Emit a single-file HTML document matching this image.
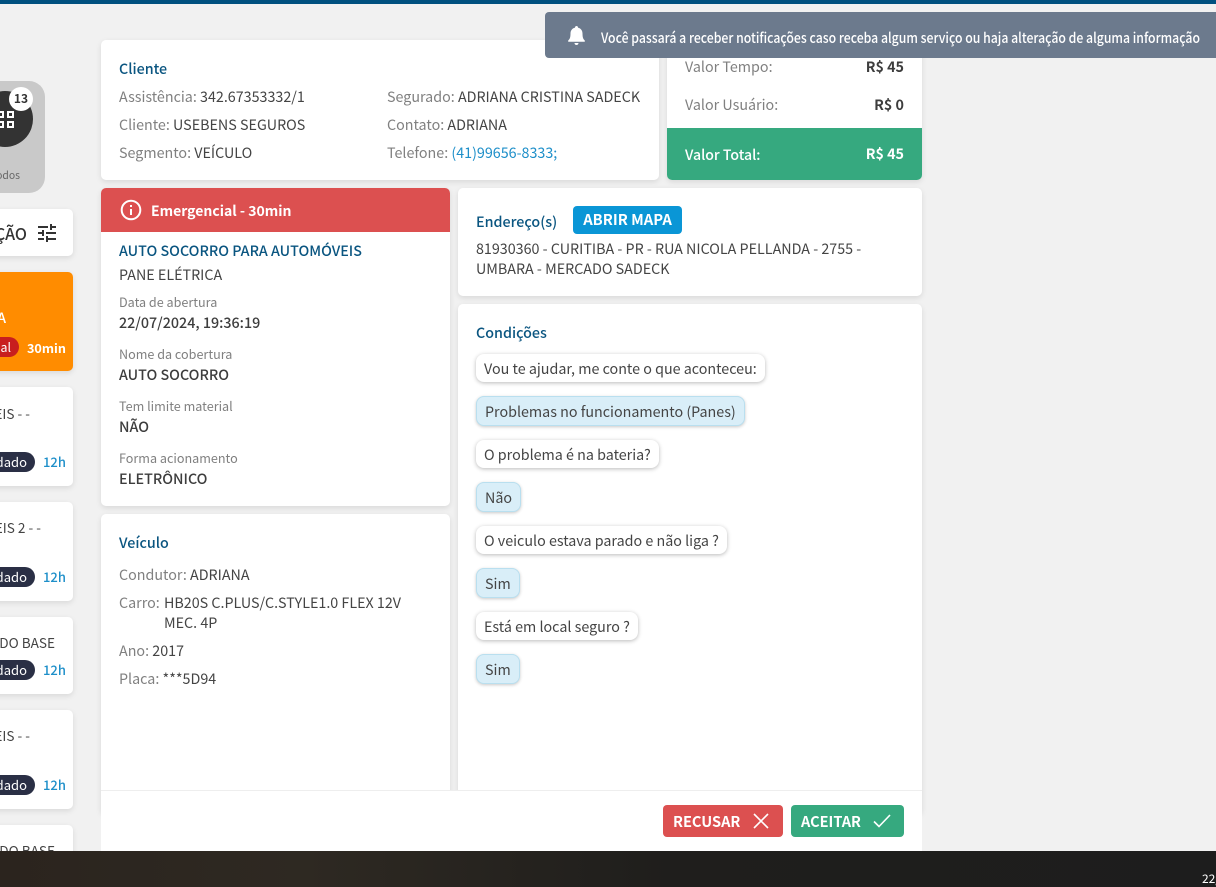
<!DOCTYPE html>
<html lang="pt-BR"><head><meta charset="utf-8"><title>Serviço</title>
<style>
html,body{margin:0;padding:0;width:1216px;height:887px;overflow:hidden;background:#f1f1f1}
body{position:relative;font-family:"Noto Sans CJK JP","Liberation Sans",sans-serif;font-size:14.3px;color:#444}
div,span,svg{box-sizing:border-box}
.a,.t{position:absolute}
.t{white-space:nowrap;line-height:20px}
.c{position:absolute;background:#fff;border-radius:5px;box-shadow:0 2px 6px rgba(0,0,0,.1)}
.g{color:#808080}
.h{color:#0a5580;font-weight:500}
.s{font-size:12.6px;color:#808080}
.b{font-weight:500;color:#3d3d3d}
.r{left:-300px;text-align:right}
.n{font-size:13.6px}
.q,.w{position:absolute;left:476px;height:28px;line-height:29px;border-radius:8px;padding:0 8px;white-space:nowrap}
.q{background:#fff;box-shadow:0 1px 4px rgba(0,0,0,.28)}
.w{height:30px;line-height:29px;padding:0 8px;background:#d9eef8;border:1px solid #b9dfef;box-shadow:0 1px 3px rgba(0,0,0,.22)}
.p{position:absolute;left:-40px;height:20px;border-radius:10px;background:#2a2f45;color:#fff;font-size:13px;line-height:20px;text-align:right;padding-right:8px;white-space:nowrap}
.tm{position:absolute;left:43px;color:#1e8fc9;font-weight:500;line-height:20px;font-size:13px}
</style></head><body>
<div class="a" style="left:0;top:0;width:1216px;height:4px;background:#00507f"></div>

<!-- sidebar -->
<div class="a" style="left:0;top:0;width:95px;height:887px;overflow:hidden">
<div class="a" style="left:-60px;top:81px;width:105px;height:112px;background:#c9c9c9;border-radius:16px"></div>
<div class="a" style="left:-23px;top:91px;width:56px;height:56px;background:#333;border-radius:50%"></div>
<div class="a" style="left:-3px;top:111px;width:7px;height:7px;border:2px solid #fff"></div>
<div class="a" style="left:7px;top:111px;width:7px;height:7px;border:2px solid #fff"></div>
<div class="a" style="left:-3px;top:121px;width:7px;height:7px;border:2px solid #fff"></div>
<div class="a" style="left:7px;top:121px;width:7px;height:7px;border:2px solid #fff"></div>
<div class="a" style="left:9px;top:87px;width:24px;height:24px;background:#fff;border-radius:50%;text-align:center;font-size:12px;line-height:24px;font-weight:700;color:#333">13</div>
<div class="t r" style="width:320px;top:165px;font-size:10.4px;color:#666">Todos</div>

<div class="c" style="left:-40px;top:209px;width:113px;height:47px"></div>
<div class="t r" style="width:327px;top:223px;color:#333;font-weight:500;font-size:16px">FILTRAÇÃO</div>
<svg class="a" style="left:38px;top:224px" width="18" height="18" viewBox="3 3 18 18" fill="#333"><path d="M3 17v2h6v-2H3zM3 5v2h10V5H3zm10 16v-2h8v-2h-8v-2h-2v6h2zM7 9v2H3v2h4v2h2V9H7zm14 4v-2H11v2h10zm-6-4h2V7h4V5h-4V3h-2v6z"/></svg>

<div class="a" style="left:-40px;top:272px;width:113px;height:99px;background:#ff8c00;border-radius:5px;box-shadow:0 2px 6px rgba(0,0,0,.1)"></div>
<div class="t r" style="width:306px;top:308px;color:#fff;font-weight:500">A</div>
<div class="p" style="top:337px;left:-80px;width:99px;background:#c81e1e;font-size:12.4px">Emergencial</div>
<div class="t" style="left:27px;top:338px;color:#fff;font-weight:700;font-size:12.6px">30min</div>

<div class="c" style="left:-40px;top:387px;width:113px;height:99px"></div>
<div class="t r n" style="width:330px;top:403px">AUTOMÓVEIS - -</div>
<div class="p" style="top:452px;width:75px">Agendado</div><div class="tm" style="top:452px">12h</div>

<div class="c" style="left:-40px;top:502px;width:113px;height:99px"></div>
<div class="t r n" style="width:341px;top:517px">AUTOMÓVEIS 2 - -</div>
<div class="p" style="top:567px;width:75px">Agendado</div><div class="tm" style="top:567px">12h</div>

<div class="c" style="left:-40px;top:617px;width:113px;height:77px"></div>
<div class="t r n" style="width:355px;top:632px">RETORNANDO BASE</div>
<div class="p" style="top:660px;width:75px">Agendado</div><div class="tm" style="top:660px">12h</div>

<div class="c" style="left:-40px;top:710px;width:113px;height:99px"></div>
<div class="t r n" style="width:330px;top:725px">AUTOMÓVEIS - -</div>
<div class="p" style="top:775px;width:75px">Agendado</div><div class="tm" style="top:775px">12h</div>

<div class="c" style="left:-40px;top:825px;width:113px;height:60px"></div>
<div class="t r n" style="width:355px;top:840px">RETORNANDO BASE</div>
</div>

<!-- Cliente -->
<div class="c" style="left:101px;top:40px;width:558px;height:140px"></div>
<div class="t h" style="left:119px;top:59px">Cliente</div>
<div class="t" style="left:119px;top:87px"><span class="g">Assistência:</span> 342.67353332/1</div>
<div class="t" style="left:119px;top:115px"><span class="g">Cliente:</span> USEBENS SEGUROS</div>
<div class="t" style="left:119px;top:143px"><span class="g">Segmento:</span> VEÍCULO</div>
<div class="t" style="left:387px;top:87px"><span class="g">Segurado:</span> ADRIANA CRISTINA SADECK</div>
<div class="t" style="left:387px;top:115px"><span class="g">Contato:</span> ADRIANA</div>
<div class="t" style="left:387px;top:143px"><span class="g">Telefone:</span> <span style="color:#1e8fc9">(41)99656-8333;</span></div>

<!-- Valores -->
<div class="c" style="left:667px;top:30px;width:255px;height:150px;overflow:hidden"><div class="a" style="left:0;top:98px;width:255px;height:52px;background:#36a97f"></div></div>
<div class="t g" style="left:685px;top:57px">Valor Tempo:</div><div class="t b" style="left:800px;width:104px;text-align:right;top:57px;font-weight:700">R$ 45</div>
<div class="t g" style="left:685px;top:95px">Valor Usuário:</div><div class="t b" style="left:800px;width:104px;text-align:right;top:95px;font-weight:700">R$ 0</div>
<div class="t" style="left:685px;top:145px;color:#fff;font-weight:500;font-size:14.100px">Valor Total:</div><div class="t" style="left:800px;width:104px;text-align:right;top:144px;color:#fff;font-weight:700">R$ 45</div>

<!-- Emergencial -->
<div class="c" style="left:101px;top:188px;width:349px;height:318px;overflow:hidden"><div class="a" style="left:0;top:0;width:349px;height:44px;background:#dc5050"></div></div>
<svg class="a" style="left:120px;top:199px" width="22" height="22" viewBox="0 0 22 22" fill="none" stroke="#fff" stroke-width="2"><circle cx="11" cy="11" r="9.300"/><path d="M11 10v6M11 6v2"/></svg>
<div class="t" style="left:151px;top:201px;color:#fff;font-weight:700;font-size:14px">Emergencial - 30min</div>
<div class="t h" style="left:119px;top:241px">AUTO SOCORRO PARA AUTOMÓVEIS</div>
<div class="t" style="left:119px;top:265px">PANE ELÉTRICA</div>
<div class="t s" style="left:119px;top:292px">Data de abertura</div>
<div class="t b" style="left:119px;top:313px">22/07/2024, 19:36:19</div>
<div class="t s" style="left:119px;top:344px">Nome da cobertura</div>
<div class="t b" style="left:119px;top:365px">AUTO SOCORRO</div>
<div class="t s" style="left:119px;top:396px">Tem limite material</div>
<div class="t b" style="left:119px;top:417px">NÃO</div>
<div class="t s" style="left:119px;top:448px">Forma acionamento</div>
<div class="t b" style="left:119px;top:469px">ELETRÔNICO</div>

<!-- Veiculo -->
<div class="c" style="left:101px;top:514px;width:349px;height:300px"></div>
<div class="t h" style="left:119px;top:533px">Veículo</div>
<div class="t" style="left:119px;top:565px"><span class="g">Condutor:</span> ADRIANA</div>
<div class="t g" style="left:119px;top:593px">Carro:</div>
<div class="t" style="left:164px;top:593px">HB20S C.PLUS/C.STYLE1.0 FLEX 12V</div>
<div class="t" style="left:164px;top:613px">MEC. 4P</div>
<div class="t" style="left:119px;top:641px"><span class="g">Ano:</span> 2017</div>
<div class="t" style="left:119px;top:669px"><span class="g">Placa:</span> ***5D94</div>

<!-- Endereco -->
<div class="c" style="left:458px;top:188px;width:464px;height:108px"></div>
<div class="t h" style="left:476px;top:212px">Endereço(s)</div>
<div class="a" style="left:573px;top:206px;width:109px;height:28px;background:#0a96d6;border-radius:4px;color:#fff;font-weight:700;text-align:center;line-height:28px;font-size:14.800px">ABRIR MAPA</div>
<div class="t" style="left:476px;top:239px">81930360 - CURITIBA - PR - RUA NICOLA PELLANDA - 2755 -</div>
<div class="t" style="left:476px;top:259px">UMBARA - MERCADO SADECK</div>

<!-- Condicoes -->
<div class="c" style="left:458px;top:304px;width:464px;height:510px"></div>
<div class="t h" style="left:476px;top:323px">Condições</div>
<div class="q" style="top:354px">Vou te ajudar, me conte o que aconteceu:</div>
<div class="w" style="top:396px">Problemas no funcionamento (Panes)</div>
<div class="q" style="top:440px">O problema é na bateria?</div>
<div class="w" style="top:482px">Não</div>
<div class="q" style="top:526px">O veiculo estava parado e não liga ?</div>
<div class="w" style="top:568px">Sim</div>
<div class="q" style="top:612px">Está em local seguro ?</div>
<div class="w" style="top:654px">Sim</div>

<!-- Rodape -->
<div class="a" style="left:101px;top:790px;width:821px;height:70px;background:#fff;border-top:1px solid #eee"></div>
<div class="a" style="left:663px;top:805px;width:120px;height:32px;background:#dc5050;border-radius:4px"></div>
<div class="t" style="left:673px;top:812px;color:#fff;font-weight:700;font-size:14.600px">RECUSAR</div>
<svg class="a" style="left:753px;top:813px" width="16" height="16" viewBox="0 0 16 16" fill="none" stroke="#fff" stroke-width="1.600"><path d="M1 1l14 14M15 1L1 15"/></svg>
<div class="a" style="left:791px;top:805px;width:113px;height:32px;background:#36a97f;border-radius:4px"></div>
<div class="t" style="left:801px;top:812px;color:#fff;font-weight:700;font-size:14.500px">ACEITAR</div>
<svg class="a" style="left:873px;top:814px" width="18" height="14" viewBox="0 0 18 14" fill="none" stroke="#fff" stroke-width="1.600"><path d="M1 7.500l5 5L17 1"/></svg>

<!-- Notificacao -->
<div class="a" style="left:545px;top:12px;width:671px;height:46px;background:#6c7a8d;border-radius:4px 0 0 4px"></div>
<svg class="a" style="left:568px;top:26px" width="17" height="20" viewBox="0 0 17 20" fill="#fff"><path d="M8.500 0c1 0 1.500.7 1.500 1.600C12.800 2.300 14.500 4.500 14.500 7.500c0 4.500 1 5.800 2.300 7v1.300H.2v-1.300c1.300-1.200 2.300-2.500 2.300-7 0-3 1.700-5.200 4.500-5.900C7 .7 7.500 0 8.500 0zM6.500 17h4c0 1.200-.9 2-2 2s-2-.8-2-2z"/></svg>
<div class="a" style="left:601px;top:28px;width:610px;height:20px;overflow:hidden"><div class="t" style="left:0;top:0;color:#fff;font-weight:500;font-size:14px;transform:scaleX(.875);transform-origin:0 0">Você passará a receber notificações caso receba algum serviço ou haja alteração de alguma informação</div></div>

<!-- Barra inferior -->
<div class="a" style="left:0;top:851px;width:1216px;height:36px;background:linear-gradient(90deg,#2b241e 0%,#2e2922 25%,#1f1e1c 55%,#1d1d1d 100%)"></div>
<div class="a" style="left:1202px;top:869px;width:14px;height:20px;overflow:hidden"><div class="t" style="left:0;top:0;color:#fff;font-size:12px">22/07/2024</div></div>
</body></html>
